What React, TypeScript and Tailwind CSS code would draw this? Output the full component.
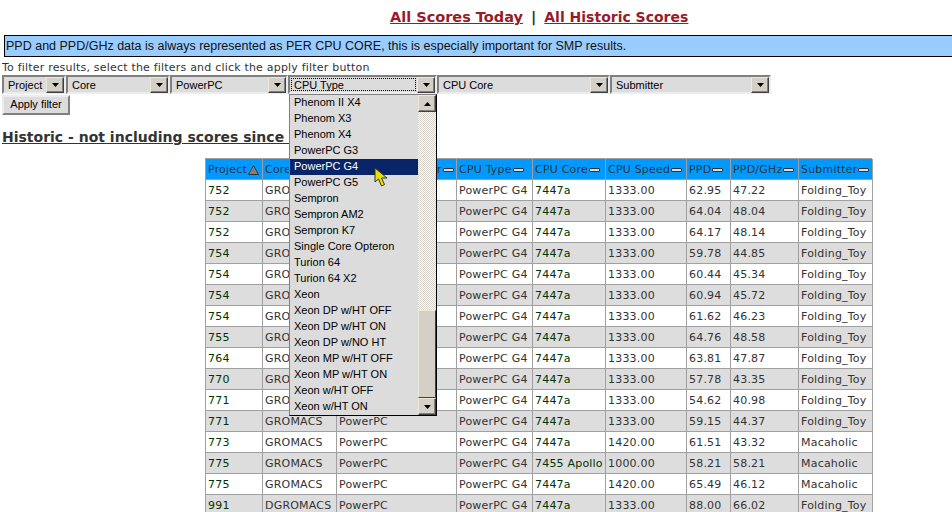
const font = "font-['DejaVu_Sans','Verdana',sans-serif]";
const uiFont = "font-['Liberation_Sans','Arial',sans-serif]";

type Row = [string, string, string, string, string, string, string];

const rows: Row[] = [
  ['752', 'GROMACS', '7447a', '1333.00', '62.95', '47.22', 'Folding_Toy'],
  ['752', 'GROMACS', '7447a', '1333.00', '64.04', '48.04', 'Folding_Toy'],
  ['752', 'GROMACS', '7447a', '1333.00', '64.17', '48.14', 'Folding_Toy'],
  ['754', 'GROMACS', '7447a', '1333.00', '59.78', '44.85', 'Folding_Toy'],
  ['754', 'GROMACS', '7447a', '1333.00', '60.44', '45.34', 'Folding_Toy'],
  ['754', 'GROMACS', '7447a', '1333.00', '60.94', '45.72', 'Folding_Toy'],
  ['754', 'GROMACS', '7447a', '1333.00', '61.62', '46.23', 'Folding_Toy'],
  ['755', 'GROMACS', '7447a', '1333.00', '64.76', '48.58', 'Folding_Toy'],
  ['764', 'GROMACS', '7447a', '1333.00', '63.81', '47.87', 'Folding_Toy'],
  ['770', 'GROMACS', '7447a', '1333.00', '57.78', '43.35', 'Folding_Toy'],
  ['771', 'GROMACS', '7447a', '1333.00', '54.62', '40.98', 'Folding_Toy'],
  ['771', 'GROMACS', '7447a', '1333.00', '59.15', '44.37', 'Folding_Toy'],
  ['773', 'GROMACS', '7447a', '1420.00', '61.51', '43.32', 'Macaholic'],
  ['775', 'GROMACS', '7455 Apollo', '1000.00', '58.21', '58.21', 'Macaholic'],
  ['775', 'GROMACS', '7447a', '1420.00', '65.49', '46.12', 'Macaholic'],
  ['991', 'DGROMACS', '7447a', '1333.00', '88.00', '66.02', 'Folding_Toy'],
];

const cpuTypes = [
  'Phenom II X4', 'Phenom X3', 'Phenom X4', 'PowerPC G3', 'PowerPC G4', 'PowerPC G5', 'Sempron',
  'Sempron AM2', 'Sempron K7', 'Single Core Opteron', 'Turion 64', 'Turion 64 X2', 'Xeon',
  'Xeon DP w/HT OFF', 'Xeon DP w/HT ON', 'Xeon DP w/NO HT', 'Xeon MP w/HT OFF', 'Xeon MP w/HT ON',
  'Xeon w/HT OFF', 'Xeon w/HT ON',
];

function ArrowButton({ up, className }: { up?: boolean; className?: string }) {
  return (
    <div className={`flex items-center justify-center bg-[#d4d0c8] border border-t-[#ece9d8] border-l-[#ece9d8] border-r-[#404040] border-b-[#404040] shadow-[inset_-1px_-1px_0_#808080] ${className}`}>
      <svg width="7" height="4" viewBox="0 0 7 4">
        <path d={up ? 'M3.5 0 L7 4 L0 4 Z' : 'M0 0 L7 0 L3.5 4 Z'} fill="#000" />
      </svg>
    </div>
  );
}

function Select({ label, width, focused }: { label: string; width: string; focused?: boolean }) {
  return (
    <div className={`${width} h-[19px] shrink-0 flex border-2 border-t-[#808080] border-l-[#808080] border-r-[#ececec] border-b-[#ececec] bg-[#dcdcdc] ${uiFont} text-[11px] text-black`}>
      <div className="flex-1 min-w-0 p-px">
        <div className={`h-full pl-[3px] leading-[14px] ${focused ? 'outline-1 outline-dotted outline-black -outline-offset-1' : ''}`}>{label}</div>
      </div>
      <ArrowButton className="w-[18px] h-[16px] -mb-px" />
    </div>
  );
}

function SortIcon({ up }: { up?: boolean }) {
  if (up) {
    return (
      <svg width="11" height="10" viewBox="0 0 11 10" className="inline-block shrink-0">
        <path d="M5.5 0.5 L10.5 9.5 L0.5 9.5 Z" fill="#808080" stroke="#333" />
      </svg>
    );
  }
  return <span className="inline-block shrink-0 w-[11px] h-[4px] bg-[#dddddd] border border-[#333] rounded-[1px]" />;
}

function Cursor() {
  return (
    <svg width="15" height="21" viewBox="0 0 15 21" className="absolute left-[374px] top-[167px]">
      <path d="M1 1 L1 15 L4.5 12 L7.5 19 L10.5 17.5 L7.5 11 L13 11 Z" fill="#e8e000" stroke="#333" strokeWidth="1" />
    </svg>
  );
}

function CpuDropdown() {
  return (
    <div className={`absolute left-[289px] top-[94px] w-[148px] h-[322px] flex bg-[#dcdcdc] border border-[#808080] border-r-black border-b-black ${uiFont} text-[11px] text-black`}>
      <div className="flex-1 min-w-0">
        {cpuTypes.map((t) => (
          <div key={t} className={`h-4 leading-[15px] pl-1 whitespace-nowrap ${t === 'PowerPC G4' ? 'bg-[#0a246a] text-white' : ''}`}>{t}</div>
        ))}
      </div>
      <div className="w-[18px] flex flex-col bg-[#eeeeee] bg-[repeating-conic-gradient(#d4d0c8_0_25%,#ffffff_0_50%)] bg-[length:2px_2px]">
        <ArrowButton up className="w-[18px] h-[17px] shrink-0" />
        <div className="flex-1" />
        <div className="h-[88px] bg-[#d4d0c8] border border-t-[#ece9d8] border-l-[#ece9d8] border-r-[#404040] border-b-[#404040]" />
        <ArrowButton className="w-[18px] h-[17px] shrink-0" />
      </div>
    </div>
  );
}

const cols = ['w-[57px]', 'w-[74px]', 'w-[120px]', 'w-[76px]', 'w-[73px]', 'w-[81px]', 'w-[44px]', 'w-[68px]', 'w-[74px]'];
const headers = ['Project', 'Core', 'CPU Manufacturer', 'CPU Type', 'CPU Core', 'CPU Speed', 'PPD', 'PPD/GHz', 'Submitter'];

function Table() {
  const cell = 'border-r border-b border-[#a0a0a0] pl-[2px] whitespace-nowrap overflow-hidden shrink-0';
  return (
    <div className={`ml-[205px] mt-[11px] w-[667px] border-l border-t border-[#a0a0a0] text-[11px] tracking-[0.2px] text-[#333333] ${font}`}>
      <div className="flex h-[21px] bg-[#0099ff] text-[#333333] leading-[20px]">
        {headers.map((h, i) => (
          <div key={h} className={`${cols[i]} ${cell} flex items-center gap-px pt-[2px]`}>
            <span className="shrink-0">{h}</span>
            <SortIcon up={i === 0} />
          </div>
        ))}
      </div>
      {rows.map((r, i) => {
        const values = [r[0], r[1], 'PowerPC', 'PowerPC G4', r[2], r[3], r[4], r[5], r[6]];
        return (
          <div key={i} className={`flex h-[21px] leading-[22px] ${i % 2 ? 'bg-[#dddddd]' : 'bg-white'}`}>
            {values.map((v, j) => (
              <div key={j} className={`${cols[j]} ${cell} ${j === 0 || j === 4 ? 'text-[#003300]' : ''}`}>{v}</div>
            ))}
          </div>
        );
      })}
    </div>
  );
}

export default function App() {
  return (
    <div className={`relative h-[512px] w-[952px] overflow-hidden bg-white ${font}`}>
      <div className="pt-[7px] pl-[390px] h-[35px] text-[14.5px] leading-[20px] font-bold text-[#333333] whitespace-nowrap">
        <span className="text-[#991b2b] underline">All Scores Today</span>
        <span className="mx-[8px]">|</span>
        <span className="text-[#991b2b] underline text-[14px]">All Historic Scores</span>
      </div>
      <div className={`ml-[4px] w-[960px] h-[22px] border border-black bg-[#99ccff] text-[12.5px] leading-[20px] text-[#111111] pl-px whitespace-nowrap ${uiFont}`}>
        PPD and PPD/GHz data is always represented as PER CPU CORE, this is especially important for SMP results.
      </div>
      <div className="mt-[4px] pl-[2px] h-[14px] text-[11px] tracking-[0.2px] leading-[14px] text-[#333333]">
        To filter results, select the filters and click the apply filter button
      </div>
      <div className="flex pl-[2px]">
        <Select label="Project" width="w-[64px]" />
        <Select label="Core" width="w-[104px]" />
        <Select label="PowerPC" width="w-[118px]" />
        <Select label="CPU Type" width="w-[149px]" focused />
        <Select label="CPU Core" width="w-[173px]" />
        <Select label="Submitter" width="w-[161px]" />
      </div>
      <div className={`ml-[2px] mt-[1px] w-[68px] h-[20px] bg-[#dcdcdc] border-2 border-t-[#ececec] border-l-[#ececec] border-r-[#808080] border-b-[#808080] text-center text-[11px] leading-[15px] text-black ${uiFont}`}>
        Apply filter
      </div>
      <div className="mt-[12px] pl-[2px] h-[20px] text-[14px] leading-[20px] font-bold text-[#333333] underline whitespace-nowrap">
        Historic - not including scores since 2008
      </div>
      <Table />
      <CpuDropdown />
      <Cursor />
    </div>
  );
}
